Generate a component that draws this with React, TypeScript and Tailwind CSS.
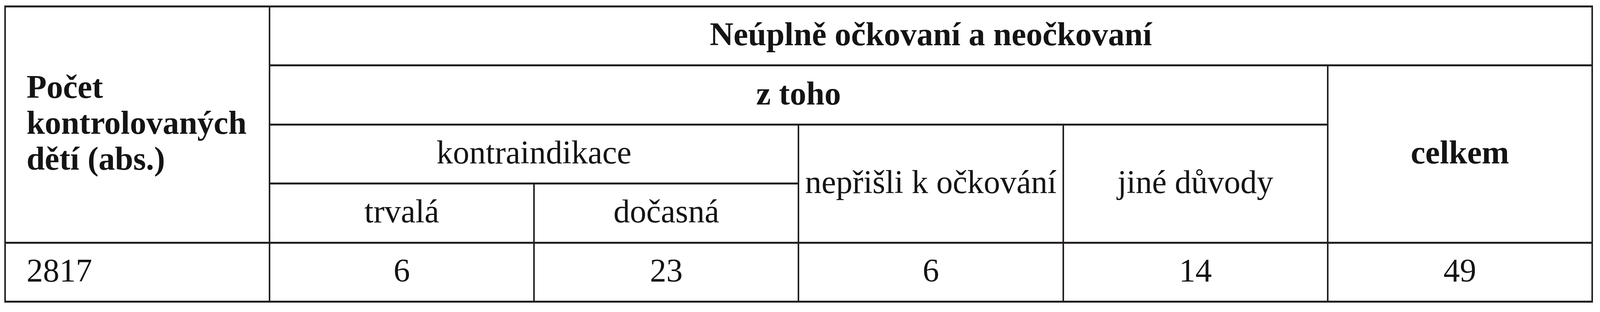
import React from 'react';

const cell =
  'bg-white flex items-center justify-center whitespace-nowrap pb-[8px] text-[84px] leading-[92px] text-[#141414]';

export default function App() {
  return (
    <div className="min-h-screen bg-white pt-[14px] pl-[0.26vw] font-['Liberation_Serif','Times_New_Roman',serif]">
      <div className="w-[99.3vw] grid grid-cols-6 grid-rows-[repeat(5,146.4px)] gap-x-[4px] gap-y-[5px] px-[4px] py-[5px] bg-[#231f20]">
        {/* row header */}
        <div className={`${cell} row-span-4 !justify-start pl-[1.3vw] font-bold`}>
          <div>
            <div>Počet</div>
            <div>kontrolovaných</div>
            <div>dětí (abs.)</div>
          </div>
        </div>
        <div className={`${cell} col-span-5 font-bold`}>Neúplně očkovaní a neočkovaní</div>
        <div className={`${cell} col-span-4 font-bold`}>z toho</div>
        <div className={`${cell} row-span-3 font-bold`}>celkem</div>
        <div className={`${cell} col-span-2`}>kontraindikace</div>
        <div className={`${cell} row-span-2`}>nepřišli k očkování</div>
        <div className={`${cell} row-span-2`}>jiné důvody</div>
        <div className={cell}>trvalá</div>
        <div className={cell}>dočasná</div>

        {/* values */}
        <div className={`${cell} !justify-start pl-[1.3vw]`}>2817</div>
        <div className={cell}>6</div>
        <div className={cell}>23</div>
        <div className={cell}>6</div>
        <div className={cell}>14</div>
        <div className={cell}>49</div>
      </div>
    </div>
  );
}
